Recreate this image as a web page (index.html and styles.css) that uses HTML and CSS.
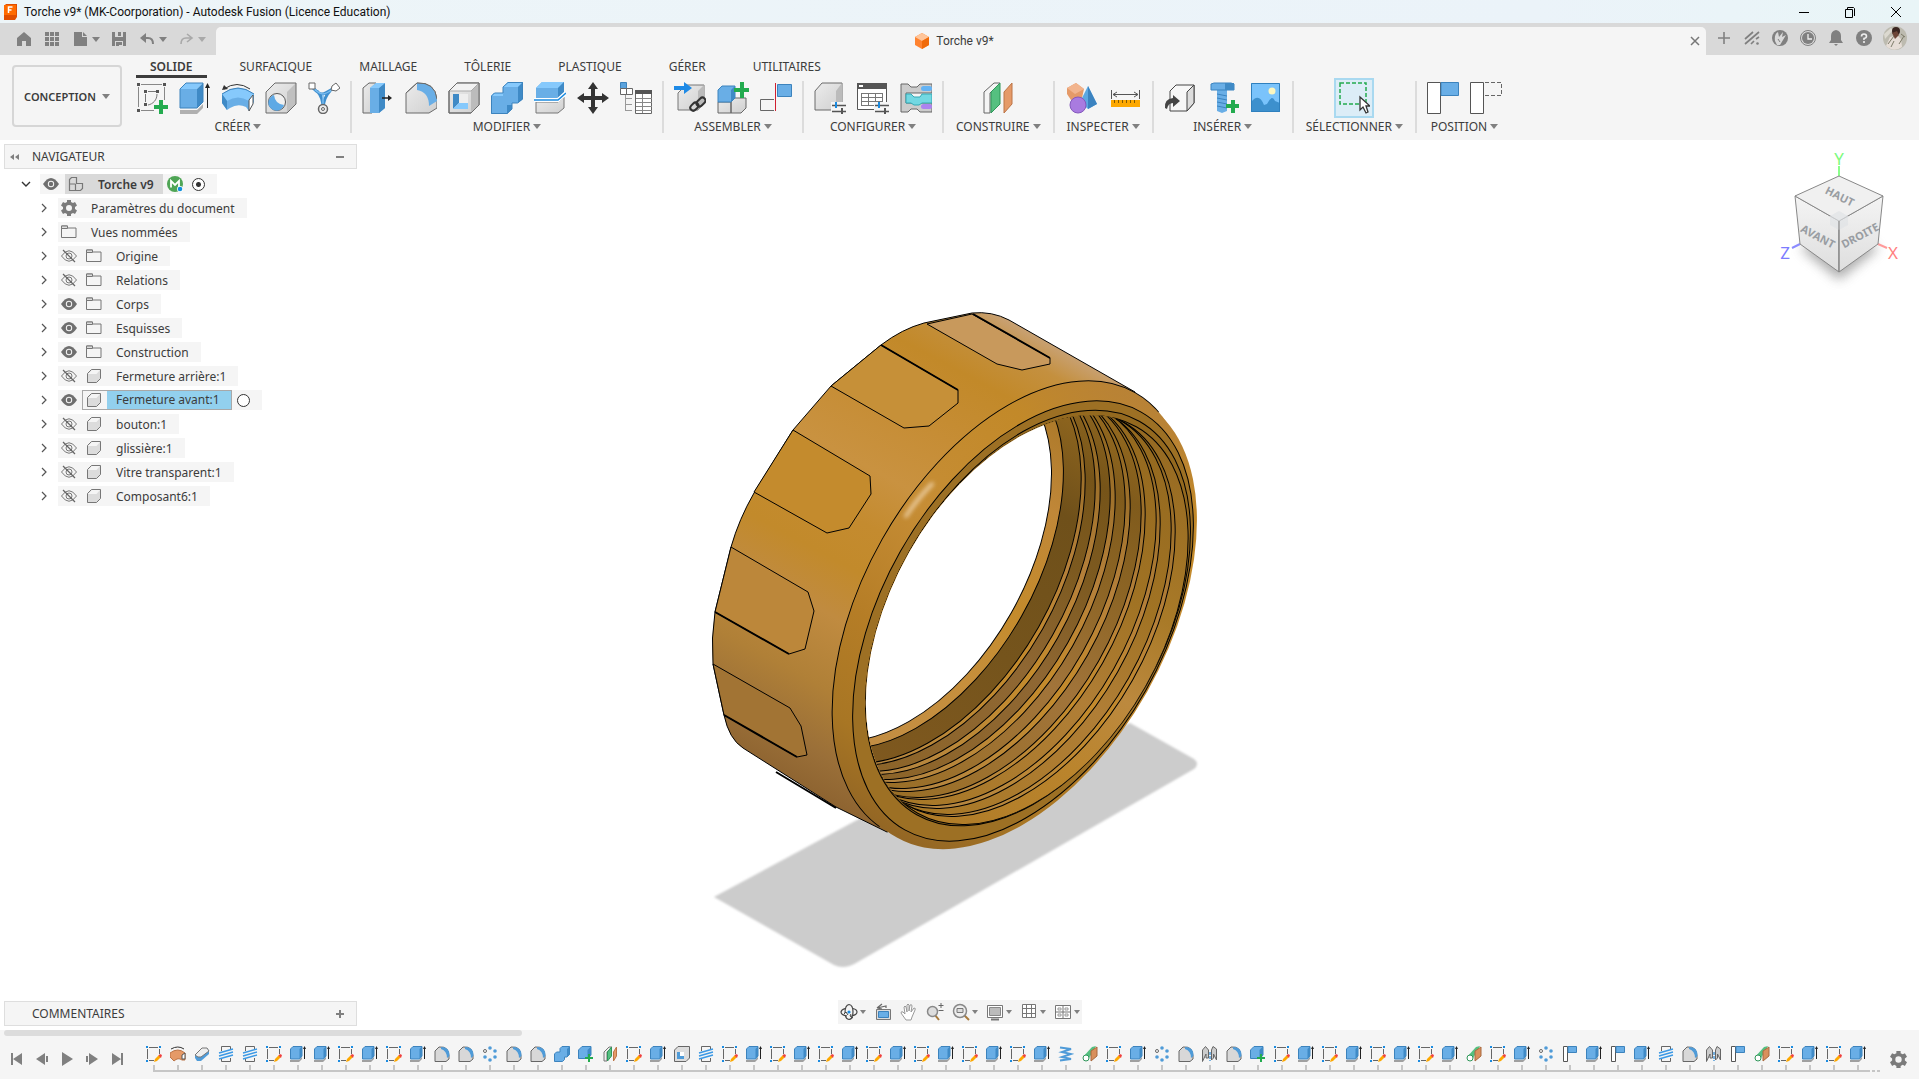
FILE: index.html
```html
<!DOCTYPE html>
<html lang="fr">
<head>
  <meta charset="UTF-8">
  <title>Torche v9* (MK-Coorporation) - Autodesk Fusion (Licence Education)</title>
  <link rel="stylesheet" href="styles.css">
</head>
<body>

  <!-- Icon sprite -->
  <svg class="sprite" aria-hidden="true">
    <defs>
      <linearGradient id="blue" x1="0" y1="0" x2="0" y2="1"><stop offset="0" stop-color="#7cc3fa"/><stop offset="1" stop-color="#5aa2dc"/></linearGradient>
      <linearGradient id="grey" x1="0" y1="0" x2="1" y2="1"><stop offset="0" stop-color="#ececec"/><stop offset="1" stop-color="#cfcfcf"/></linearGradient>
    </defs>

    <!-- ribbon, 32x32 -->
    <symbol id="i-sketch" viewBox="0 0 32 32">
      <path d="M2.500 5v20M5 2.500h21M28.500 5v13M5 28.500h13" fill="none" stroke="#888"/>
      <path d="M1 1h3v3H1zM27 1h3v3h-3zM1 27h3v3H1z" fill="#555"/>
      <path d="M9.500 12v8M12 9.500h8M21 12c0 6-4 10-9 11" fill="none" stroke="#777"/>
      <path d="M8 8h3v3H8zM20 8h3v3h-3zM8 21h3v3H8z" fill="#555"/>
      <path d="M23 18h4v5h5v4h-5v5h-4v-5h-5v-4h5z" fill="#23ab4f"/>
    </symbol>
    <symbol id="i-extrude" viewBox="0 0 32 32">
      <path d="M1 28h17l6-6v4l-6 6H1z" fill="#b0b0b0"/>
      <path d="M1 7v19h17V7z" fill="#69aee6"/><path d="M1 7l6-6h17l-6 6z" fill="#86c9fc"/><path d="M18 7l6-6v19l-6 6z" fill="#3f8ac6"/>
      <path d="M1 7l6-6h17v19l-6 6H1z" fill="none" stroke="#3c83bd"/>
      <path d="M28.500 26V3" stroke="#222"/><path d="M26 6l2.500-5L31 6z" fill="#222"/>
    </symbol>
    <symbol id="i-revolve" viewBox="0 0 32 32">
      <path d="M0 12q16-12 32 0v8l-5 9-3-4q-8-4-16 1l-3 2-5-7z" fill="#69aee6"/>
      <path d="M0 12q16-10 32 0l-5 7q-11-7-22 0z" fill="#86c9fc"/>
      <path d="M0 12l5 7v9l-5-7z" fill="#3f8ac6"/><path d="M0 12q16-12 32 0" fill="none" stroke="#3c83bd"/>
      <path d="M27 18l4-5v9l-4 7z" fill="#fff" stroke="#555"/>
      <path d="M2 7q13-9 26 0" fill="none" stroke="#333"/><path d="M0 8l2-5 4 4z" fill="#333"/>
    </symbol>
    <symbol id="i-hole" viewBox="0 0 32 32">
      <path d="M1 10l9-9h21v21l-9 9H1z" fill="url(#grey)"/><path d="M22 10l9-9v21l-9 9z" fill="#c0c0c0"/>
      <path d="M1 10l9-9h21v21l-9 9H1z" fill="none" stroke="#6b6b6b"/>
      <circle cx="12" cy="20" r="8.500" fill="#f0f0f0" stroke="#555"/><path d="M9 13a8 8 0 1 0 10 10q-9-1-10-10z" fill="#5ea9e5"/>
    </symbol>
    <symbol id="i-form" viewBox="0 0 32 32">
      <path d="M5 6q6 6 9 6t12-6M9 9q6 6 6 17M22 9q-6 6-7 17" fill="none" stroke="#3f8fce" stroke-width="3"/>
      <path d="M6 7q6 5 9 5t10-5M15 13v10" fill="none" stroke="#79bdf1" stroke-width="1.500"/>
      <path d="M1 1h6v6H1zM24 4l4-3 4 5-4 3-5-1z" fill="#fff" stroke="#666"/><circle cx="15" cy="27" r="4.500" fill="#eee" stroke="#666" stroke-width="1.500"/><circle cx="15" cy="27" r="1.500" fill="none" stroke="#666"/>
    </symbol>
    <symbol id="i-presspull" viewBox="0 0 32 32">
      <path d="M1 6l6-5h7v25l-4 5H1z" fill="url(#grey)" stroke="#666"/>
      <path d="M8 6l6-5h9v25l-6 5H8z" fill="#69aee6"/><path d="M17 6l6-5v25l-6 5z" fill="#3f8ac6"/><path d="M8 6l6-5h9l-6 5z" fill="#86c9fc"/>
      <path d="M20 16h8" stroke="#222" stroke-width="1.500"/><path d="M26 13l4 3-4 3z" fill="#222"/>
    </symbol>
    <symbol id="i-fillet" viewBox="0 0 32 32">
      <path d="M1 31V11L12 1q18-1 20 16v9l-8 5z" fill="url(#grey)" stroke="#6b6b6b"/>
      <path d="M12 1q18-1 20 18l-8 5Q24 10 12 8z" fill="#69aee6"/><path d="M12 1L1 11M12 1q18-1 20 16" fill="none" stroke="#6b6b6b"/>
    </symbol>
    <symbol id="i-shell" viewBox="0 0 32 32">
      <path d="M1 9l8-8h22v22l-8 8H1z" fill="url(#grey)" stroke="#6b6b6b"/><path d="M23 9l8-8v22l-8 8z" fill="#bcbcbc"/><path d="M1 9l8-8h22l-8 8z" fill="#f2f2f2" stroke="#aaa"/>
      <path d="M5 12h15v15H5z" fill="#eee"/><path d="M5 12h6v9l-6 6z" fill="#3f8ac6"/><path d="M5 27l6-6h9v6z" fill="#86c9fc"/><path d="M1 9l8-8h22v22l-8 8H1z" fill="none" stroke="#6b6b6b"/>
    </symbol>
    <symbol id="i-combine" viewBox="0 0 32 32">
      <path d="M0 14l3-3h9V5l5-5h15v17l-5 4h-6v6l-5 5H0z" fill="#69aee6"/>
      <path d="M12 5l5-5h15l-5 5zM0 14l3-3h9v3z" fill="#86c9fc"/><path d="M27 5l5-5v17l-5 4zM16 23h5v4l-5 5z" fill="#3f8ac6"/>
      <path d="M.500 14l3-3H12V5l5-4.500h14.500V17l-5 4H21v6l-5 4.500H.500z" fill="none" stroke="#3c83bd"/>
    </symbol>
    <symbol id="i-split" viewBox="0 0 32 32">
      <path d="M2 20h22l6-5v11l-6 5H2z" fill="url(#grey)" stroke="#777"/>
      <path d="M2 6l6-6h22v10l-6 6H2z" fill="#69aee6"/><path d="M2 6l6-6h22l-6 6z" fill="#86c9fc"/><path d="M24 6l6-6v10l-6 6z" fill="#3f8ac6"/>
      <path d="M0 18h24l8-7" fill="none" stroke="#fff" stroke-width="4"/><path d="M0 18h24l8-7" fill="none" stroke="#1b8be0" stroke-width="1.500"/>
    </symbol>
    <symbol id="i-move" viewBox="0 0 32 32">
      <path d="M16 0l5 7h-3v7h7v-3l7 5-7 5v-3h-7v7h3l-5 7-5-7h3v-7H7v3l-7-5 7-5v3h7V7h-3z" fill="#333"/>
    </symbol>
    <symbol id="i-params" viewBox="0 0 32 32">
      <path d="M.500.500h6v6h-6z" fill="#5ba3dd" stroke="#3c83bd"/><path d="M.500 6.500h6v6h-6zM6.500 6.500h6v6h-6z" fill="#fff" stroke="#666"/>
      <path d="M5.500 13v15M5 16.500h7M5 22.500h7M5 28.500h7" fill="none" stroke="#999"/>
      <path d="M15.500 8.500h16v23h-16z" fill="#fff" stroke="#666"/><path d="M15 8h17v4H15z" fill="#555"/><path d="M16 16.500h16M16 20.500h16M16 24.500h16M16 28.500h16M22.500 12v19" stroke="#888"/>
    </symbol>
    <symbol id="i-link" viewBox="0 0 32 32">
      <path d="M4 11l8-8h18v18l-6 7H4z" fill="url(#grey)" stroke="#777"/><path d="M24 9l6-6v18l-6 7z" fill="#bbb"/>
      <path d="M0 4h10V0l8 6-8 6V8H0z" fill="#1e8ae6"/>
      <rect x="16" y="22" width="9" height="6" rx="3" transform="rotate(-45 20 25)" fill="none" stroke="#333" stroke-width="2"/><rect x="22" y="17" width="10" height="6" rx="3" transform="rotate(-45 27 20)" fill="none" stroke="#333" stroke-width="2"/>
    </symbol>
    <symbol id="i-newcomp" viewBox="0 0 32 32">
      <path d="M1 20h13v11H1zM14 20l4-4h11v10l-5 5H14z" fill="url(#grey)" stroke="#666"/>
      <path d="M1 8l4-4h13v12l-4 4H1z" fill="#69aee6" stroke="#3c83bd"/><path d="M14 8l4-4v12l-4 4z" fill="#3f8ac6"/>
      <path d="M23 0h4v6h6v4h-6v6h-4v-6h-6V6h6z" fill="#23ab4f"/>
    </symbol>
    <symbol id="i-joint" viewBox="0 0 32 32">
      <path d="M14 17.500H.500v11H14" fill="none" stroke="#666"/><path d="M17.500 2.500h14v12h-14z" fill="#69aee6" stroke="#3c83bd"/><path d="M15.500 1v28" stroke="#d02030"/>
    </symbol>
    <symbol id="i-config" viewBox="0 0 32 32">
      <path d="M1 9l7-8h20v20l-6 7H1z" fill="url(#grey)" stroke="#6b6b6b"/><path d="M22 9l6-8v20l-6 7z" fill="#bbb"/>
      <path d="M17 20h16v12H17z" fill="#f5f5f5"/><path d="M18 23.500h14M18 29.500h14" stroke="#555" stroke-width="1.500"/><path d="M22 20v6" stroke="#1b8be0" stroke-width="2"/><path d="M28 26v6" stroke="#555" stroke-width="2"/>
    </symbol>
    <symbol id="i-configtable" viewBox="0 0 32 32">
      <path d="M.500 1.500h29v26h-29z" fill="#fff" stroke="#555"/><path d="M0 1h30v6H0z" fill="#555"/><path d="M2 3h4v2H2z" fill="#fff"/>
      <path d="M4 11.500h22M4 15.500h22M4 19.500h22M4 23.500h22M4.500 11v13M11.500 11v13M18.500 11v13M25.500 11v13" stroke="#777"/>
      <path d="M17 20h15v12H17z" fill="#f5f5f5"/><path d="M18 23.500h14M18 29.500h14" stroke="#555" stroke-width="1.500"/><path d="M22 20v6" stroke="#1b8be0" stroke-width="2"/><path d="M28 26v6" stroke="#555" stroke-width="2"/>
    </symbol>
    <symbol id="i-rules" viewBox="0 0 32 32">
      <path d="M1 2h7l3 3h6l3-3h12v9H6v10h26v9H20l-3-3h-6l-3 3H1z" fill="#ccc" stroke="#666"/>
      <path d="M6 12h5l3 3h6l2-3h10v9H22l-3 2h-5l-3-2H6z" fill="#73d8e2" stroke="#35a9b5"/>
      <rect x="21" y="4" width="11" height="5" rx="2.500" fill="#64b3f4"/><rect x="21" y="22" width="11" height="5" rx="2.500" fill="#ac83ef"/>
    </symbol>
    <symbol id="i-plane" viewBox="0 0 32 32">
      <path d="M2 10l10-9h6L8 11v20H2z" fill="#f4f4f4" stroke="#666"/><path d="M9 10l9-9v21l-9 9z" fill="#55c080" stroke="#2f9659"/><path d="M22 10l8-9v21l-8 9z" fill="#e59a68" stroke="#bc7446"/>
    </symbol>
    <symbol id="i-inspect" viewBox="0 0 32 32">
      <path d="M1 6l9-5 8 6-2 9-11 2-4-6z" fill="#e59a68"/><path d="M1 6l9-5 8 6-9 5z" fill="#f2b48d"/>
      <path d="M22 4l9 18-9 5-8-7z" fill="#5ba8e2"/><path d="M22 4l9 18-9 5z" fill="#3b83c0"/><circle cx="12" cy="23" r="8" fill="#a97be0" stroke="#8458bd"/>
    </symbol>
    <symbol id="i-measure" viewBox="0 0 32 32">
      <path d="M2.500 8v9M30.500 8v9M4 12.500h25M8 10l-4 2.500 4 2.500M25 10l4 2.500-4 2.500" fill="none" stroke="#555"/>
      <path d="M2 18h29v7H2z" fill="#fda800"/><path d="M5.500 18v3M9.500 18v3M13.500 18v3M17.500 18v3M21.500 18v3M25.500 18v3" stroke="#805800"/>
    </symbol>
    <symbol id="i-insert" viewBox="0 0 32 32">
      <path d="M6 9l6-6h18v18l-7 8H6z" fill="#f7f7f7" stroke="#444"/><path d="M23 10l7-7v18l-7 8z" fill="#ddd" stroke="#444"/>
      <path d="M1 26q-1-9 8-10v-3l7 6-7 6v-4q-5 0-6 6z" fill="#444"/>
    </symbol>
    <symbol id="i-bolt" viewBox="0 0 32 32">
      <path d="M10 8h10v21l-5 2-5-2z" fill="#69aee6"/><path d="M10 12l10 2M10 16l10 2M10 20l10 2M10 24l10 2" stroke="#3b83c0"/>
      <path d="M4 2l3-1h17l3 1v6H4z" fill="#69aee6" stroke="#3b83c0"/><path d="M18 1h9v7h-9z" fill="#3f8ac6"/>
      <path d="M24 18h4v4h4v4h-4v5h-4v-5h-5v-4h5z" fill="#23ab4f"/>
    </symbol>
    <symbol id="i-picture" viewBox="0 0 32 32">
      <path d="M1 1h29v29H1z" fill="#7ac3fb"/><path d="M1 20q8-10 13 3l3-1q5-10 8-3l5 2v9H1z" fill="#3d90cd"/><circle cx="22" cy="9" r="3.500" fill="#fbf6c0"/><path d="M1.500 1.500h28v28h-28z" fill="none" stroke="#2f80be"/>
    </symbol>
    <symbol id="i-select" viewBox="0 0 32 32">
      <path d="M2 1h26v21H2z" fill="none" stroke="#23ab4f" stroke-width="1.500" stroke-dasharray="4 2"/>
      <path d="M22 15v13l3-3 3 6 2-1-2-6h4z" fill="#fff" stroke="#333" stroke-width="1.300"/>
    </symbol>
    <symbol id="i-position" viewBox="0 0 32 32">
      <path d="M.500.500h13v31H.500z" fill="#fff" stroke="#555"/><path d="M14 .500h17.500v13H14z" fill="#69aee6" stroke="#3c83bd"/>
    </symbol>
    <symbol id="i-revert" viewBox="0 0 32 32">
      <path d="M.500.500h13v31H.500z" fill="#fff" stroke="#555"/><path d="M15 .500h16.500v13H15" fill="none" stroke="#666" stroke-dasharray="4 2"/>
    </symbol>

    <!-- quick access and account bar, 18x18 -->
    <symbol id="i-home" viewBox="0 0 18 18"><path d="M9 2l7 6v8h-5v-5H7v5H2V8z" fill="#808080"/></symbol>
    <symbol id="i-apps" viewBox="0 0 18 18"><path d="M2 2h4v4H2zM7 2h4v4H7zM12 2h4v4h-4zM2 7h4v4H2zM7 7h4v4H7zM12 7h4v4h-4zM2 12h4v4H2zM7 12h4v4H7zM12 12h4v4h-4z" fill="#808080"/></symbol>
    <symbol id="i-file" viewBox="0 0 18 18"><path d="M3 2h8v5h5v9H3zM12 2l4 4h-4z" fill="#808080"/></symbol>
    <symbol id="i-save" viewBox="0 0 18 18"><path d="M2 2h14v14H2z" fill="#808080"/><path d="M5 2h8v5H5zM5 11h8v5H5z" fill="#d9d9d9"/><path d="M8 2h3v4H8zM6 12h6v3H9v1H6z" fill="#808080"/></symbol>
    <symbol id="i-undo" viewBox="0 0 18 18"><path d="M4 8h6q5 0 5 6" fill="none" stroke="#808080" stroke-width="2"/><path d="M8 3v10L2 8z" fill="#808080"/></symbol>
    <symbol id="i-redo" viewBox="0 0 18 18"><path d="M10 4l5 4-5 4M15 8H9q-5 0-5 6" fill="none" stroke="#a9a9a9" stroke-width="1.600"/></symbol>
    <symbol id="i-plus" viewBox="0 0 18 18"><path d="M9 3v12M3 9h12" stroke="#808080" stroke-width="1.600"/></symbol>
    <symbol id="i-ext" viewBox="0 0 18 18"><path d="M2 10l8-7M2 15L16 3M8 15l3-3M13 10l3-2" fill="none" stroke="#808080" stroke-width="1.700"/><circle cx="14.500" cy="14.500" r="1.300" fill="#808080"/></symbol>
    <symbol id="i-learn" viewBox="0 0 18 18"><circle cx="9" cy="9" r="8" fill="#808080"/><path d="M4 12q-1-7 3-9l1 5 4-5-1 5 4-2-3 5-3 5h-3z" fill="#d9d9d9"/><path d="M7 10l2 3" stroke="#808080"/></symbol>
    <symbol id="i-clock" viewBox="0 0 18 18"><circle cx="9" cy="9" r="7.500" fill="none" stroke="#808080"/><circle cx="9" cy="9" r="6" fill="#808080"/><path d="M9 5v5h4" fill="none" stroke="#eee" stroke-width="1.300"/></symbol>
    <symbol id="i-bell" viewBox="0 0 18 18"><path d="M9 1q5 1 5 6v4l2 3H2l2-3V7q0-5 5-6zM7 15h4l-2 2z" fill="#808080"/></symbol>
    <symbol id="i-help" viewBox="0 0 18 18"><circle cx="9" cy="9" r="8" fill="#808080"/><path d="M6.500 7.500Q6.500 5 9 5t2.500 2.300Q11.500 9 9 9.500V11" fill="none" stroke="#eee" stroke-width="1.600"/><circle cx="9" cy="13" r="1.100" fill="#eee"/></symbol>

    <!-- browser tree, 16x16 -->
    <symbol id="i-right" viewBox="0 0 16 16"><path d="M6 4l4 4-4 4" fill="none" stroke="#555" stroke-width="1.200"/></symbol>
    <symbol id="i-down" viewBox="0 0 16 16"><path d="M4 6l4 4 4-4" fill="none" stroke="#333" stroke-width="1.400"/></symbol>
    <symbol id="i-eye" viewBox="0 0 16 16"><path d="M0 8q8-12 16 0-8 12-16 0z" fill="#6e6e6e"/><circle cx="8" cy="8" r="3.200" fill="#f5f5f5"/><circle cx="8" cy="8" r="2.200" fill="#6e6e6e"/></symbol>
    <symbol id="i-eyeoff" viewBox="0 0 16 16"><path d="M.500 8q7.500-10.500 15 0-7.500 10.500-15 0z" fill="none" stroke="#777"/><circle cx="8" cy="8" r="3" fill="none" stroke="#777"/><path d="M2 2l12 12" stroke="#666" stroke-width="1.200"/></symbol>
    <symbol id="i-gear" viewBox="0 0 16 16"><path fill-rule="evenodd" d="M6 0h4v2l2 1 2-1 2 3.500L14 7v2l2 1.500L14 14l-2-1-2 1v2H6v-2l-2-1-2 1-2-3.500L2 9V7L0 5.500 2 2l2 1 2-1zM8 5a3 3 0 1 0 0 6 3 3 0 0 0 0-6z" fill="#7b7b7b"/></symbol>
    <symbol id="i-folder" viewBox="0 0 16 16"><path d="M.500 2h6v2h8.500v9.500H.500z" fill="#f5f5f5" stroke="#777"/><path d="M.500 4.500h6V2h-6z" fill="#ddd" stroke="#777"/></symbol>
    <symbol id="i-body" viewBox="0 0 16 16"><path d="M1.500 5.500l4-4h9v9l-4 4h-9z" fill="#dcdcdc" stroke="#777"/><path d="M2 6l4-4h8l-3.500 4z" fill="#f5f5f5"/></symbol>
    <symbol id="i-assembly" viewBox="0 0 16 16"><path d="M1.500 3.500l2-2h5v6h6v5l-2 2h-11zM1.500 8h6M7.500 8v6" fill="none" stroke="#777" stroke-width="1.200"/></symbol>

    <!-- timeline, 16x16 -->
    <symbol id="t-sketch" viewBox="0 0 16 16"><path d="M1.500 3v10M3 1.500h9M13.500 3v5M3 14.500h5" fill="none" stroke="#666"/><path d="M0 0h2v2H0zM13 0h2v2h-2zM0 14h2v2H0z" fill="#1b8be0"/><path d="M8 16l1-3 4-4 2 2-4 4z" fill="#fda800"/><path d="M12.500 9.500L14 8l2 1-1 3z" fill="#f04040"/></symbol>
    <symbol id="t-extrude" viewBox="0 0 16 16"><path d="M0 14h9l3-3v2l-3 3H0z" fill="#a0a0a0"/><path d="M.500 3L3 .500h9V10l-2.500 3h-9z" fill="#69aee6" stroke="#3c83bd"/><path d="M9.500 3L12 .500V10l-2.500 3z" fill="#3f8ac6"/><path d="M14.500 2v11" stroke="#222"/><path d="M13 3l1.500-3L16 3z" fill="#222"/></symbol>
    <symbol id="t-revolve" viewBox="0 0 16 16"><path d="M0 7q8-6 15 0v7h-3q-4-3-8 1l-4-4z" fill="#e59a68" stroke="#bc7446"/><path d="M1 3q7-4 13 0" fill="none" stroke="#333"/><path d="M12 9l3-2v6h-3z" fill="#fff" stroke="#555"/></symbol>
    <symbol id="t-chamfer" viewBox="0 0 16 16"><path d="M1 9l7-7h5l2 3v3l-8 7H3l-2-3z" fill="#4f9bd8"/><path d="M1 9l7-7h5l2 3-8 6H4z" fill="#eee" stroke="#777"/></symbol>
    <symbol id="t-thread" viewBox="0 0 16 16"><path d="M3.500 5V.500h9V4M3.500 12v3.500h9V12" fill="none" stroke="#666"/><path d="M1 7l14-4M1 10l14-4M1 13l14-4" stroke="#3c99e5" stroke-width="1.400"/></symbol>
    <symbol id="t-fillet" viewBox="0 0 16 16"><path d="M1 15.500V5l4-4q10-1 10 9v3l-3 2.500z" fill="#d8d8d8" stroke="#666"/><path d="M7 1q9 0 8.500 9l-2.500 2q0-7-6-9z" fill="#4f9bd8"/></symbol>
    <symbol id="t-pattern" viewBox="0 0 16 16"><g fill="#4f9bd8"><circle cx="8" cy="2" r="1.800"/><circle cx="13" cy="5" r="1.800"/><circle cx="13" cy="11" r="1.800"/><circle cx="8" cy="14" r="1.800"/><circle cx="3" cy="11" r="1.800"/></g><circle cx="3" cy="5" r="1.500" fill="#fff" stroke="#666"/></symbol>
    <symbol id="t-combine" viewBox="0 0 16 16"><path d="M.500 8l2-2H6V2.500l2-2h7.500v8L13 11h-2.500v2.500l-2 2h-8z" fill="#69aee6" stroke="#3c83bd"/><path d="M13 3l2.500-2.500v8L13 11z" fill="#3f8ac6"/></symbol>
    <symbol id="t-newcomp" viewBox="0 0 16 16"><path d="M.500 4L4 .500h9V9l-3 3.500H.500z" fill="#69aee6" stroke="#3c83bd"/><path d="M9.500 4L13 .500V9l-3.500 3.500z" fill="#3f8ac6"/><path d="M10 8h2v3h3v2h-3v3h-2v-3H7v-2h3z" fill="#23ab4f"/></symbol>
    <symbol id="t-plane" viewBox="0 0 16 16"><path d="M2 6l5-5h3L5 6v9H2z" fill="#eee" stroke="#777"/><path d="M5.500 6l4-5v9l-4 5z" fill="#55c080" stroke="#2f9659"/><path d="M11.500 6l3-5v9l-3 5z" fill="#e59a68" stroke="#bc7446"/></symbol>
    <symbol id="t-shell" viewBox="0 0 16 16"><path d="M.500 4L4 .500h11.500V12L12 15.500H.500z" fill="#ddd" stroke="#666"/><path d="M3 6h7v7H3z" fill="#fff"/><path d="M3 6h3v4h4v3H3z" fill="#4f9bd8"/></symbol>
    <symbol id="t-coil" viewBox="0 0 16 16"><path d="M2 1.500l11 1.500-9 3 9 2-9 3 9 2-11 1.500" fill="none" stroke="#4f9bd8" stroke-width="2"/></symbol>
    <symbol id="t-tangent" viewBox="0 0 16 16"><path d="M1 11L10 1l4-1-8 14q-4 2-5-3z" fill="#55c080"/><circle cx="4" cy="12" r="3" fill="#fff" stroke="#2f9659"/><path d="M9 5l6-4v9l-6 5z" fill="#d9905c" stroke="#a8693e"/></symbol>
    <symbol id="t-mirror" viewBox="0 0 16 16"><path d="M.500 15.500V4l3-3.500L6.500 4v8H4V8zM14.500 14V3L11 .500 9.500 4v10l2-2V8z" fill="#ccc" stroke="#666"/><path d="M8 6v9" stroke="#4f9bd8" stroke-width="1.500" stroke-dasharray="3 1"/></symbol>
    <symbol id="t-position" viewBox="0 0 16 16"><path d="M1.500.500h4v15h-4z" fill="#fff" stroke="#555"/><path d="M6 .500h8.500v6H6z" fill="#69aee6" stroke="#3c83bd"/></symbol>

    <!-- playback and view navigation, 18x18 -->
    <symbol id="p-start" viewBox="0 0 18 18"><path d="M3 3h2v12H3zM14 3v12L5 9z" fill="#808080"/></symbol>
    <symbol id="p-prev" viewBox="0 0 18 18"><path d="M12 3v12L3 9zM13 6h2v6h-2z" fill="#808080"/></symbol>
    <symbol id="p-play" viewBox="0 0 18 18"><path d="M4 2l11 7-11 7z" fill="#808080"/></symbol>
    <symbol id="p-next" viewBox="0 0 18 18"><path d="M6 3v12l9-6zM3 6h2v6H3z" fill="#808080"/></symbol>
    <symbol id="p-end" viewBox="0 0 18 18"><path d="M13 3h2v12h-2zM4 3v12l9-6z" fill="#808080"/></symbol>
    <symbol id="n-orbit" viewBox="0 0 18 18"><path d="M5 10Q5 2 9 1.500 13 2 13 9t-4 7.500Q6 16 5.500 13M13 5.500q4 1 4 3.500 0 3-6 4M7 13q-6-1-6-4 0-2 4-3.500" fill="none" stroke="#444" stroke-width="1.200"/><path d="M4 11l2-2 2 3M11 11l-1 2 3 2" fill="none" stroke="#444"/><circle cx="9" cy="9" r="1.600" fill="#1b8be0"/></symbol>
    <symbol id="n-look" viewBox="0 0 18 18"><path d="M2.500 6.500h14v10h-14z" fill="#ddd" stroke="#777"/><path d="M4.500 8.500h10v6h-10z" fill="#69aee6" stroke="#3c83bd"/><path d="M3 5l9-2v2M3 5l5-4M3 5l5 1" fill="none" stroke="#666" stroke-width="1.200"/></symbol>
    <symbol id="n-pan" viewBox="0 0 18 18"><path d="M6 17L1 10q0-2 2-1l2 2-1-7q1-2 2 0l1 5V2q1-2 2 0v6l1-6q2-1 2 1l-1 6 3-4q2 0 1 2l-3 7-1 3z" fill="#fff" stroke="#999"/></symbol>
    <symbol id="n-zoom" viewBox="0 0 18 18"><path d="M9 12l4 5" stroke="#a87a3c" stroke-width="2"/><circle cx="6.500" cy="8.500" r="5" fill="#ddd" stroke="#888" stroke-width="1.500"/><path d="M15 0v5M12.500 2.500h5M12.500 7.500h5" stroke="#666"/></symbol>
    <symbol id="n-fit" viewBox="0 0 18 18"><path d="M12 12l5 5" stroke="#a87a3c" stroke-width="2"/><circle cx="8" cy="8" r="6.500" fill="#eee" stroke="#888" stroke-width="1.500"/><path d="M5 5.500h6v4H5z" fill="#ddd" stroke="#777"/></symbol>
    <symbol id="n-display" viewBox="0 0 18 18"><path d="M1.500 2.500h15v12h-15z" fill="#fff" stroke="#777"/><path d="M3.500 4.500h11v8h-11z" fill="#bbb" stroke="#888"/><path d="M5 16.500h8" stroke="#777" stroke-width="2"/></symbol>
    <symbol id="n-grid" viewBox="0 0 18 18"><path d="M2.500 1.500h13v13h-13zM6.500 1.500v13M11.500 1.500v13M2.500 5.500h13M2.500 10.500h13" fill="#fff" stroke="#777"/></symbol>
    <symbol id="n-views" viewBox="0 0 18 18"><path d="M1.500 2.500h15v13h-15zM9 2.500v13M1.500 9h15" fill="#fff" stroke="#777"/><path d="M4 5h3v2H4zM11 5h3v2h-3zM4 11h3v2H4zM11 11h3v2h-3z" fill="none" stroke="#999"/></symbol>
  </svg>

  <header class="titlebar">
    <svg class="app-logo" viewBox="0 0 14 16"><path d="M1 2l2-2h11v13l-2 3H1z" fill="#e04e00"/><path d="M1 1h12v10H1z" fill="#ff6b00"/><path d="M5.500 9V3h4M5.500 6h3" fill="none" stroke="#fff" stroke-width="1.500"/></svg>
    <span class="app-title">Torche v9* (MK-Coorporation) - Autodesk Fusion (Licence Education)</span>
    <button class="window-button" aria-label="Réduire"><svg viewBox="0 0 12 12"><path d="M1 6.500h10" stroke="#000"/></svg></button>
    <button class="window-button" aria-label="Restaurer"><svg viewBox="0 0 12 12"><path d="M1.500 3.500h7v8h-7zM3.500 3V1.500h6l1 1V10" fill="none" stroke="#000"/></svg></button>
    <button class="window-button" aria-label="Fermer"><svg viewBox="0 0 12 12"><path d="M1 1l10 10M11 1L1 11" stroke="#000"/></svg></button>
  </header>

  <div class="docbar">
    <div class="quick-access">
      <button aria-label="Accueil"><svg><use href="#i-home"/></svg></button>
      <button aria-label="Données"><svg><use href="#i-apps"/></svg></button>
      <button aria-label="Fichier"><svg><use href="#i-file"/></svg><i class="caret"></i></button>
      <button aria-label="Enregistrer"><svg><use href="#i-save"/></svg></button>
      <button aria-label="Annuler"><svg><use href="#i-undo"/></svg><i class="caret"></i></button>
      <button aria-label="Rétablir"><svg><use href="#i-redo"/></svg><i class="caret light"></i></button>
    </div>
    <div class="doc-tab">
      <div class="doc-name">
        <svg viewBox="0 0 16 16"><path d="M8 0l7 4v8l-7 4-7-4V4z" fill="#ff8330"/><path d="M8 0l7 4-7 4-7-4z" fill="#ffc59a"/><path d="M15 4v8l-7 4V8z" fill="#f06a0a"/></svg>
        <span>Torche v9*</span>
      </div>
      <button class="doc-close" aria-label="Fermer le document"><svg viewBox="0 0 12 12"><path d="M2 2l8 8M10 2l-8 8" stroke="#777" stroke-width="1.500"/></svg></button>
    </div>
    <div class="account-bar">
      <button aria-label="Nouvelle conception"><svg><use href="#i-plus"/></svg></button>
      <button aria-label="Extensions"><svg><use href="#i-ext"/></svg></button>
      <button aria-label="Apprentissage"><svg><use href="#i-learn"/></svg></button>
      <button aria-label="Etat des tâches"><svg><use href="#i-clock"/></svg></button>
      <button aria-label="Notifications"><svg><use href="#i-bell"/></svg></button>
      <button aria-label="Aide"><svg><use href="#i-help"/></svg></button>
      <button class="avatar" aria-label="Profil">
        <svg viewBox="0 0 24 24"><circle cx="12" cy="12" r="12" fill="#bdbbb0"/><path d="M3 20l4-9 7-2 4 4 1 8q-8 6-16-1z" fill="#e6ddd6"/><path d="M1 8l7-6 2 2-8 9z" fill="#dcd9d0"/><circle cx="13" cy="5" r="4" fill="#3a2520"/><path d="M9 7l3 6 4-4-2-4z" fill="#6d4537"/><path d="M5 18l6-8M16 18l5-8M8 21l3-6M18 8l4 3" stroke="#7d7b68"/></svg>
      </button>
    </div>
  </div>

  <div class="ribbon">
    <button class="workspace">CONCEPTION <i class="caret"></i></button>
    <div class="ribbon-main">
      <nav class="ribbon-tabs">
        <button class="active">SOLIDE</button>
        <button>SURFACIQUE</button>
        <button>MAILLAGE</button>
        <button>TÔLERIE</button>
        <button>PLASTIQUE</button>
        <button>GÉRER</button>
        <button>UTILITAIRES</button>
      </nav>
      <div class="ribbon-groups">
        <div class="group">
          <div class="tools">
            <button aria-label="Esquisse"><svg><use href="#i-sketch"/></svg></button>
            <button aria-label="Extrusion"><svg><use href="#i-extrude"/></svg></button>
            <button aria-label="Révolution"><svg><use href="#i-revolve"/></svg></button>
            <button aria-label="Perçage"><svg><use href="#i-hole"/></svg></button>
            <button aria-label="Forme"><svg><use href="#i-form"/></svg></button>
          </div>
          <button class="group-menu">CRÉER<i class="caret"></i></button>
        </div>
        <div class="group">
          <div class="tools">
            <button aria-label="Appuyer/Tirer"><svg><use href="#i-presspull"/></svg></button>
            <button aria-label="Congé"><svg><use href="#i-fillet"/></svg></button>
            <button aria-label="Coque"><svg><use href="#i-shell"/></svg></button>
            <button aria-label="Combiner"><svg><use href="#i-combine"/></svg></button>
            <button aria-label="Scinder"><svg><use href="#i-split"/></svg></button>
            <button aria-label="Déplacer"><svg><use href="#i-move"/></svg></button>
            <button aria-label="Paramètres"><svg><use href="#i-params"/></svg></button>
          </div>
          <button class="group-menu">MODIFIER<i class="caret"></i></button>
        </div>
        <div class="group">
          <div class="tools">
            <button aria-label="Insérer un composant"><svg><use href="#i-link"/></svg></button>
            <button aria-label="Nouveau composant"><svg><use href="#i-newcomp"/></svg></button>
            <button aria-label="Liaison"><svg><use href="#i-joint"/></svg></button>
          </div>
          <button class="group-menu">ASSEMBLER<i class="caret"></i></button>
        </div>
        <div class="group">
          <div class="tools">
            <button aria-label="Configurer"><svg><use href="#i-config"/></svg></button>
            <button aria-label="Table de configuration"><svg><use href="#i-configtable"/></svg></button>
            <button aria-label="Règles"><svg><use href="#i-rules"/></svg></button>
          </div>
          <button class="group-menu">CONFIGURER<i class="caret"></i></button>
        </div>
        <div class="group">
          <div class="tools">
            <button aria-label="Plan décalé"><svg><use href="#i-plane"/></svg></button>
          </div>
          <button class="group-menu">CONSTRUIRE<i class="caret"></i></button>
        </div>
        <div class="group">
          <div class="tools">
            <button aria-label="Propriétés"><svg><use href="#i-inspect"/></svg></button>
            <button aria-label="Mesurer"><svg><use href="#i-measure"/></svg></button>
          </div>
          <button class="group-menu">INSPECTER<i class="caret"></i></button>
        </div>
        <div class="group">
          <div class="tools">
            <button aria-label="Insérer un dérivé"><svg><use href="#i-insert"/></svg></button>
            <button aria-label="Insérer une fixation"><svg><use href="#i-bolt"/></svg></button>
            <button aria-label="Insérer une image"><svg><use href="#i-picture"/></svg></button>
          </div>
          <button class="group-menu">INSÉRER<i class="caret"></i></button>
        </div>
        <div class="group">
          <div class="tools">
            <button class="pressed" aria-label="Sélectionner"><svg><use href="#i-select"/></svg></button>
          </div>
          <button class="group-menu">SÉLECTIONNER<i class="caret"></i></button>
        </div>
        <div class="group">
          <div class="tools">
            <button aria-label="Capturer la position"><svg><use href="#i-position"/></svg></button>
            <button aria-label="Rétablir la position"><svg><use href="#i-revert"/></svg></button>
          </div>
          <button class="group-menu">POSITION<i class="caret"></i></button>
        </div>
      </div>
    </div>
  </div>

  <main class="viewport">
    <aside class="side">
      <div class="panel-header">
        <button aria-label="Replier"><svg viewBox="0 0 16 16"><path d="M7 5v6L3 8zM12 5v6L8 8z" fill="#808080"/></svg></button>
        <h2>NAVIGATEUR</h2>
        <button aria-label="Réduire"><svg viewBox="0 0 16 16"><path d="M4 7h8v2H4z" fill="#808080"/></svg></button>
      </div>
      <ul class="tree">
        <li class="root">
          <button class="toggle" aria-label="Replier"><svg><use href="#i-down"/></svg></button>
          <div class="node"><svg><use href="#i-eye"/></svg><span class="root-name"><svg><use href="#i-assembly"/></svg>Torche v9</span>
            <svg class="badge" viewBox="0 0 16 16"><circle cx="8" cy="8" r="8" fill="#4fa555"/><path d="M4 11.500V5l4 4 4-4v6.500" fill="none" stroke="#fff" stroke-width="1.800"/><circle cx="13" cy="13" r="3" fill="#fff"/><circle cx="13" cy="13" r="2.300" fill="#1090dc"/></svg>
            <input type="radio" name="active" aria-label="Activer Torche v9" checked>
          </div>
        </li>
        <li><button class="toggle" aria-label="Déplier"><svg><use href="#i-right"/></svg></button><div class="node"><svg><use href="#i-gear"/></svg><span>Paramètres du document</span></div></li>
        <li><button class="toggle" aria-label="Déplier"><svg><use href="#i-right"/></svg></button><div class="node"><svg><use href="#i-folder"/></svg><span>Vues nommées</span></div></li>
        <li><button class="toggle" aria-label="Déplier"><svg><use href="#i-right"/></svg></button><div class="node"><svg><use href="#i-eyeoff"/></svg><svg><use href="#i-folder"/></svg><span>Origine</span></div></li>
        <li><button class="toggle" aria-label="Déplier"><svg><use href="#i-right"/></svg></button><div class="node"><svg><use href="#i-eyeoff"/></svg><svg><use href="#i-folder"/></svg><span>Relations</span></div></li>
        <li><button class="toggle" aria-label="Déplier"><svg><use href="#i-right"/></svg></button><div class="node"><svg><use href="#i-eye"/></svg><svg><use href="#i-folder"/></svg><span>Corps</span></div></li>
        <li><button class="toggle" aria-label="Déplier"><svg><use href="#i-right"/></svg></button><div class="node"><svg><use href="#i-eye"/></svg><svg><use href="#i-folder"/></svg><span>Esquisses</span></div></li>
        <li><button class="toggle" aria-label="Déplier"><svg><use href="#i-right"/></svg></button><div class="node"><svg><use href="#i-eye"/></svg><svg><use href="#i-folder"/></svg><span>Construction</span></div></li>
        <li><button class="toggle" aria-label="Déplier"><svg><use href="#i-right"/></svg></button><div class="node"><svg><use href="#i-eyeoff"/></svg><svg><use href="#i-body"/></svg><span>Fermeture arrière:1</span></div></li>
        <li><button class="toggle" aria-label="Déplier"><svg><use href="#i-right"/></svg></button><div class="node"><svg><use href="#i-eye"/></svg><span class="selected"><svg><use href="#i-body"/></svg><span>Fermeture avant:1</span></span><input type="radio" name="active" aria-label="Activer Fermeture avant:1"></div></li>
        <li><button class="toggle" aria-label="Déplier"><svg><use href="#i-right"/></svg></button><div class="node"><svg><use href="#i-eyeoff"/></svg><svg><use href="#i-body"/></svg><span>bouton:1</span></div></li>
        <li><button class="toggle" aria-label="Déplier"><svg><use href="#i-right"/></svg></button><div class="node"><svg><use href="#i-eyeoff"/></svg><svg><use href="#i-body"/></svg><span>glissière:1</span></div></li>
        <li><button class="toggle" aria-label="Déplier"><svg><use href="#i-right"/></svg></button><div class="node"><svg><use href="#i-eyeoff"/></svg><svg><use href="#i-body"/></svg><span>Vitre transparent:1</span></div></li>
        <li><button class="toggle" aria-label="Déplier"><svg><use href="#i-right"/></svg></button><div class="node"><svg><use href="#i-eyeoff"/></svg><svg><use href="#i-body"/></svg><span>Composant6:1</span></div></li>
      </ul>
      <div class="panel-header comments">
        <h2>COMMENTAIRES</h2>
        <button aria-label="Ajouter un commentaire"><svg viewBox="0 0 16 16"><path d="M7 4h2v3h3v2H9v3H7V9H4V7h3z" fill="#808080"/></svg></button>
      </div>
    </aside>

    <div class="scene">
      <svg class="model" viewBox="5 0 530 690" role="img" aria-label="Fermeture avant">
        <defs>
          <linearGradient id="bodyFill" gradientUnits="userSpaceOnUse" x1="184" y1="540" x2="426" y2="90">
            <stop offset="0" stop-color="#8d6330"/><stop offset=".08" stop-color="#9a6f38"/><stop offset=".2" stop-color="#b08037"/><stop offset=".33" stop-color="#c08b40"/><stop offset=".43" stop-color="#c28a2b"/><stop offset=".52" stop-color="#c48b2f"/><stop offset=".62" stop-color="#c99240"/><stop offset=".74" stop-color="#c68d35"/><stop offset=".87" stop-color="#c28929"/><stop offset=".95" stop-color="#c4903f"/><stop offset="1" stop-color="#c8a070"/>
          </linearGradient>
          <!-- ellipse fills run along the long axis, bottom left to top right -->
          <linearGradient id="rimFill">
            <stop offset="0" stop-color="#936624"/><stop offset=".15" stop-color="#a87624"/><stop offset=".35" stop-color="#b57d26"/><stop offset=".6" stop-color="#c68d35"/><stop offset=".85" stop-color="#c28929"/><stop offset="1" stop-color="#b88236"/>
          </linearGradient>
          <linearGradient id="landFill">
            <stop offset="0" stop-color="#b07c28"/><stop offset=".25" stop-color="#ba842c"/><stop offset=".45" stop-color="#bc893e"/><stop offset=".65" stop-color="#a97a28"/><stop offset="1" stop-color="#966a22"/>
          </linearGradient>
          <linearGradient id="crestFill">
            <stop offset="0" stop-color="#b28442"/><stop offset=".4" stop-color="#c48b2c"/><stop offset=".65" stop-color="#b5803a"/><stop offset="1" stop-color="#8d651f"/>
          </linearGradient>
          <linearGradient id="grooveFront">
            <stop offset="0" stop-color="#a87827"/><stop offset=".4" stop-color="#b07e36"/><stop offset=".65" stop-color="#a17324"/><stop offset="1" stop-color="#94691f"/>
          </linearGradient>
          <linearGradient id="grooveMid">
            <stop offset="0" stop-color="#9a6f27"/><stop offset=".4" stop-color="#a1743a"/><stop offset=".65" stop-color="#8d6525"/><stop offset=".85" stop-color="#805b1c"/><stop offset="1" stop-color="#94691f"/>
          </linearGradient>
          <linearGradient id="grooveBack">
            <stop offset="0" stop-color="#8c6428"/><stop offset=".4" stop-color="#8f6733"/><stop offset=".65" stop-color="#7d5a20"/><stop offset=".85" stop-color="#765419"/><stop offset="1" stop-color="#8d651f"/>
          </linearGradient>
          <linearGradient id="recessFill">
            <stop offset="0" stop-color="#80591f"/><stop offset=".4" stop-color="#75541c"/><stop offset=".75" stop-color="#6f501a"/><stop offset="1" stop-color="#94691f"/>
          </linearGradient>
          <linearGradient id="lipFill">
            <stop offset="0" stop-color="#c28d45"/><stop offset=".3" stop-color="#c68f3c"/><stop offset=".5" stop-color="#c48b2c"/><stop offset=".75" stop-color="#c08738"/><stop offset="1" stop-color="#a87626"/>
          </linearGradient>
          <filter id="soft"><feGaussianBlur stdDeviation="1"/></filter>
          <filter id="glow" x="-50%" y="-50%" width="200%" height="200%"><feGaussianBlur stdDeviation="2"/></filter>
          <ellipse id="thread" rx="220" ry="134" transform="rotate(-60.500)"/>
          <ellipse id="mouth" rx="226" ry="136" transform="translate(338 328) rotate(-60.500)"/>
          <clipPath id="mouthClip"><use href="#mouth"/></clipPath>
          <clipPath id="boreClip"><ellipse rx="222" ry="136" transform="translate(337 330) rotate(-60.500)"/></clipPath>
          <clipPath id="edgeClip"><path d="M0 0h426L472 117 184 545 0 600z"/></clipPath>
        </defs>

        <path d="M24 607l156-84 260-90 64 36q6 5 0 10L166 673q-12 7-22 2z" fill="#ccc" filter="url(#soft)"/>

        <!-- knurled outer body -->
        <path d="M282 23q20-2 37 7l126 72L300 500 197 542l-51-25-93-59q-14-9-19-33L23 374q-2-26 2-52l16-65q8-28 23-54l39-63 38-44 50-41q21-16 43-22z" fill="url(#bodyFill)" stroke="#000"/>
        <g stroke="#000" stroke-linejoin="round">
          <path d="M237 34l45-10 78 44v6l-28 6-25-6z" fill="#c8995c"/>
          <path d="M141 96l50-41 77 45v13l-29 23-25 2z" fill="#c69038"/>
          <path d="M64 202l39-62 77 46 1 18-22 34-22 5z" fill="#c48b2d"/>
          <path d="M25 322l16-65 77 45 6 19-9 38-16 5z" fill="#bc873a"/>
          <path d="M23 374l77 44 11 18 6 29-10 2-73-42z" fill="#a27434"/>
        </g>
        <path d="M283 24l77 44M191 55l77 45M25 322l74 42M34 425l73 42M86 482l60 36" fill="none" stroke="#000" stroke-width="2"/>

        <!-- rim -->
        <ellipse rx="252" ry="148" transform="translate(321 322) rotate(-60.500)" fill="url(#rimFill)"/>
        <ellipse rx="250" ry="146" transform="translate(330 330) rotate(-60.500)" fill="url(#rimFill)"/>
        <g clip-path="url(#edgeClip)">
          <ellipse rx="252" ry="148" transform="translate(321 322) rotate(-60.500)" fill="none" stroke="#000"/>
        </g>
        <path d="M216 226q12-18 26-32" fill="none" stroke="#f3d9b4" stroke-width="4" stroke-linecap="round" opacity=".8" filter="url(#glow)"/>
        <ellipse rx="240" ry="141" transform="translate(333 331) rotate(-60.500)" fill="#9d7024" stroke="#000"/>
        <use href="#mouth" fill="#94691f" stroke="#000"/>

        <!-- threaded bore, painted from the mouth to the back -->
        <g clip-path="url(#mouthClip)">
          <ellipse rx="222" ry="136" transform="translate(337 330) rotate(-60.500)" fill="url(#landFill)" stroke="#000"/>
          <g clip-path="url(#boreClip)" stroke="#000">
            <use href="#thread" transform="translate(326 324)" fill="url(#crestFill)"/>
            <use href="#thread" transform="translate(322 322)" fill="url(#grooveFront)"/>
            <use href="#thread" transform="translate(311 316)" fill="url(#crestFill)"/>
            <use href="#thread" transform="translate(307 313)" fill="url(#grooveFront)"/>
            <use href="#thread" transform="translate(296 307)" fill="url(#crestFill)"/>
            <use href="#thread" transform="translate(292 305)" fill="url(#grooveMid)"/>
            <use href="#thread" transform="translate(281 299)" fill="url(#crestFill)"/>
            <use href="#thread" transform="translate(276 296)" fill="url(#grooveMid)"/>
            <use href="#thread" transform="translate(266 290)" fill="url(#crestFill)"/>
            <use href="#thread" transform="translate(261 287)" fill="url(#grooveBack)"/>
            <use href="#thread" transform="translate(251 282)" fill="url(#crestFill)"/>
            <use href="#thread" transform="translate(246 279)" fill="url(#grooveBack)"/>
            <use href="#thread" transform="translate(236 273)" fill="url(#crestFill)"/>
            <use href="#thread" transform="translate(232 271)" fill="url(#recessFill)"/>
            <ellipse rx="212" ry="126" transform="translate(222 264) rotate(-60.500)" fill="url(#lipFill)"/>
            <ellipse rx="205" ry="122" transform="translate(215 263) rotate(-60.500)" fill="#fff"/>
          </g>
        </g>
      </svg>
    </div>

    <svg class="viewcube" viewBox="0 0 179 150" role="img" aria-label="Cube de vue">
      <defs>
        <filter id="cubeShadow" x="-50%" y="-50%" width="200%" height="200%"><feGaussianBlur stdDeviation="6"/></filter>
        <linearGradient id="cubeFace" x1="0" y1="0" x2="0" y2="1"><stop offset="0" stop-color="#f4f4f4"/><stop offset="1" stop-color="#dedede"/></linearGradient>
      </defs>
      <path d="M60 108l39-16 40 16-40 32z" fill="#777" opacity=".6" filter="url(#cubeShadow)"/>
      <path d="M99 26v10" stroke="#8aff8a" stroke-width="2"/><path d="M60 104l-8 4" stroke="#8a8aff" stroke-width="2"/><path d="M138 104l9 4" stroke="#ff9a9a" stroke-width="2"/>
      <path d="M55 56l44 25v51l-39-28z" fill="url(#cubeFace)" stroke="#888"/>
      <path d="M99 81l44-25-5 48-39 28z" fill="url(#cubeFace)" stroke="#888"/>
      <path d="M99 36l44 20-44 25-44-25z" fill="#f0f0f0" stroke="#888"/>
      <path d="M99 71l9 5v9l-9 5-9-5v-9z" fill="#dfe2e6" opacity=".7"/><path d="M99 81v51" stroke="#888"/>
      <g class="cube-text" text-anchor="middle">
        <text transform="translate(98 60) rotate(27)">HAUT</text>
        <text transform="translate(76 100) rotate(28)">AVANT</text>
        <text transform="translate(122 99) rotate(-28)">DROITE</text>
      </g>
      <g class="axis-text" text-anchor="middle"><text x="99" y="25" fill="#7dfa7d">Y</text><text x="45" y="119" fill="#7c7cff">Z</text><text x="153" y="119" fill="#ff8080">X</text></g>
    </svg>

    <div class="view-nav">
      <button aria-label="Orbite"><svg><use href="#n-orbit"/></svg><i class="caret"></i></button>
      <button aria-label="Regarder"><svg><use href="#n-look"/></svg></button>
      <button aria-label="Panoramique"><svg><use href="#n-pan"/></svg></button>
      <button aria-label="Zoom"><svg><use href="#n-zoom"/></svg></button>
      <button aria-label="Ajuster"><svg><use href="#n-fit"/></svg><i class="caret"></i></button>
      <button aria-label="Affichage"><svg><use href="#n-display"/></svg><i class="caret"></i></button>
      <button aria-label="Grille"><svg><use href="#n-grid"/></svg><i class="caret"></i></button>
      <button aria-label="Fenêtres"><svg><use href="#n-views"/></svg><i class="caret"></i></button>
    </div>
  </main>

  <footer class="timeline">
    <div class="scrollbar"></div>
    <div class="timeline-row">
      <div class="playback">
        <button aria-label="Début"><svg><use href="#p-start"/></svg></button>
        <button aria-label="Précédent"><svg><use href="#p-prev"/></svg></button>
        <button aria-label="Lecture"><svg><use href="#p-play"/></svg></button>
        <button aria-label="Suivant"><svg><use href="#p-next"/></svg></button>
        <button aria-label="Fin"><svg><use href="#p-end"/></svg></button>
      </div>
      <div class="features" id="features"></div>
      <button class="settings" aria-label="Paramètres du scénario"><svg><use href="#i-gear"/></svg></button>
    </div>
  </footer>

  <script src="timeline.js"></script>
</body>
</html>
```

FILE: styles.css
```css
* {
  box-sizing: border-box;
}

body {
  margin: 0;
  min-height: 100vh;
  display: flex;
  flex-direction: column;
  background: #fff;
  color: #3c3c3c;
  font-family: "Noto Sans", "Open Sans", sans-serif;
  font-size: 12px;
  overflow: hidden;
}

button {
  display: flex;
  align-items: center;
  justify-content: center;
  padding: 0;
  border: none;
  background: none;
  color: inherit;
  font: inherit;
}

svg {
  display: block;
  flex: none;
}

.sprite {
  position: absolute;
  width: 0;
  height: 0;
}

.caret {
  border: 4px solid transparent;
  border-top: 5px solid #808080;
  border-bottom: none;
}

.caret.light {
  border-top-color: #a9a9a9;
}

/* Window title */
.titlebar {
  display: flex;
  align-items: center;
  height: 23px;
  padding-left: 3px;
  background: linear-gradient(90deg, #edf5f8, #ebf3f9 80%, #e9f5f7);
  color: #111;
}

.app-logo {
  width: 14px;
  height: 16px;
  margin-right: 7px;
}

.app-title {
  flex: 1;
  font-family: Roboto, sans-serif;
}

.window-button {
  width: 46px;
  height: 23px;
}

.window-button svg {
  width: 12px;
  height: 12px;
}

/* Document bar */
.docbar {
  display: flex;
  height: 32px;
  padding-top: 4px;
  background: #d9d9d9;
}

.quick-access {
  display: flex;
  align-items: center;
  gap: 10px;
  width: 216px;
  padding-left: 15px;
  padding-bottom: 4px;
}

.quick-access svg,
.account-bar svg {
  width: 18px;
  height: 18px;
}

.quick-access .caret {
  margin-left: 3px;
}

.doc-tab {
  flex: 1;
  display: flex;
  align-items: center;
  border-radius: 5px 5px 0 0;
  background: #f5f5f5;
}

.doc-name {
  flex: 1;
  display: flex;
  align-items: center;
  justify-content: center;
  gap: 6px;
  padding-left: 8px;
  font-family: Roboto, sans-serif;
}

.doc-name svg {
  width: 16px;
  height: 16px;
}

.doc-close {
  width: 22px;
}

.doc-close svg {
  width: 12px;
  height: 12px;
}

.account-bar {
  display: flex;
  align-items: center;
  gap: 10px;
  padding: 0 12px 6px 9px;
}

.account-bar .avatar svg {
  width: 24px;
  height: 24px;
}

/* Ribbon */
.ribbon {
  display: flex;
  height: 85px;
  background: #f5f5f5;
}

.workspace {
  gap: 6px;
  width: 110px;
  height: 62px;
  margin: 10px 4px 0 12px;
  border: 2px solid #d6d6d6;
  border-radius: 4px;
  font-size: 11px;
  font-weight: 600;
}

.ribbon-main {
  flex: 1;
}

.ribbon-tabs {
  display: flex;
  gap: 19px;
  padding-left: 10px;
}

.ribbon-tabs button {
  height: 23px;
  padding: 2px 14px 0;
  border-bottom: 3px solid transparent;
}

.ribbon-tabs .active {
  border-bottom-color: #3c3c3c;
  font-weight: 600;
}

.ribbon-groups {
  display: flex;
  padding-top: 3px;
}

.group {
  display: flex;
  flex-direction: column;
  align-items: center;
  height: 52px;
  border-right: 2px solid #dcdcdc;
}

.group:last-child {
  border-right: none;
}

.tools {
  display: flex;
  gap: 11px;
  padding: 1px 10px;
}

.tools svg {
  width: 32px;
  height: 32px;
}

.tools .pressed {
  width: 40px;
  height: 40px;
  margin: -4px 0;
  border: 2px solid #a9d9f0;
  background: #dcedf7;
}

.group-menu {
  gap: 3px;
  padding: 0 12px;
  height: 18px;
  margin-top: 3px;
  white-space: nowrap;
}

/* Viewport */
.viewport {
  position: relative;
  flex: 1;
  display: flex;
}

.side {
  position: absolute;
  top: 0;
  bottom: 0;
  left: 0;
  display: flex;
  flex-direction: column;
  width: 361px;
  padding: 4px;
}

.panel-header {
  display: flex;
  align-items: center;
  height: 25px;
  padding: 0 8px 0 2px;
  border: 1px solid #dedede;
  background: #f5f5f5;
}

.panel-header h2 {
  flex: 1;
  margin: 0 0 0 9px;
  font-size: 12px;
  font-weight: 400;
}

.panel-header svg {
  width: 16px;
  height: 16px;
}

.panel-header.comments {
  margin-top: auto;
}

.comments h2 {
  margin-left: 25px;
}

.tree {
  margin: 3px 0 0;
  padding: 0;
  list-style: none;
}

.tree li {
  display: flex;
  align-items: center;
  height: 24px;
  padding-left: 32px;
}

.tree .root {
  padding-left: 14px;
}

.tree svg {
  width: 16px;
  height: 16px;
}

.toggle {
  width: 16px;
  margin-right: 6px;
}

.node {
  display: flex;
  align-items: center;
  gap: 9px;
  height: 20px;
  padding: 0 12px 0 3px;
  background: #f5f5f5;
}

.node > span {
  margin-left: 5px;
}

.node > .root-name {
  display: flex;
  align-items: center;
  gap: 14px;
  height: 20px;
  margin-left: -3px;
  margin-right: -5px;
  padding: 0 9px 0 3px;
  background: #d9d9d9;
  font-weight: 600;
}

.node > .selected {
  display: flex;
  align-items: center;
  height: 20px;
  margin-left: -4px;
  margin-right: -4px;
  border: 1px solid #a8a8a8;
}

.selected svg {
  margin: 0 5px 0 3px;
}

.selected span {
  padding: 0 11px 0 9px;
  background: #92d0ee;
  line-height: 18px;
}

.node input {
  appearance: none;
  width: 13px;
  height: 13px;
  margin: 0;
  border: 1px solid #333;
  border-radius: 50%;
  background: #fff;
}

.node input:checked {
  background: radial-gradient(#333 0 2px, #fff 3px);
}

.scene {
  flex: 1;
  display: flex;
  justify-content: center;
  align-items: center;
  padding-top: 100px;
}

.model {
  width: 530px;
  height: 690px;
}

.viewcube {
  position: absolute;
  top: 0;
  right: 0;
  width: 179px;
  height: 150px;
}

.cube-text {
  fill: #999da2;
  font-size: 11px;
  font-weight: 700;
}

.axis-text {
  font-size: 17px;
}

.view-nav {
  position: absolute;
  bottom: 6px;
  left: 50%;
  display: flex;
  align-items: center;
  gap: 8px;
  height: 24px;
  padding: 0 2px;
  background: #f4f4f4;
  transform: translateX(-50%);
}

.view-nav svg {
  width: 18px;
  height: 18px;
}

.view-nav .caret {
  margin-left: 2px;
  border-width: 4px 3px 0;
}

/* Timeline */
.timeline {
  height: 49px;
  background: #f5f5f5;
}

.scrollbar {
  width: 27%;
  height: 6px;
  margin-left: 4px;
  border-radius: 3px;
  background: #dcdcdc;
}

.timeline-row {
  display: flex;
  padding: 10px 12px 0 8px;
}

.playback {
  display: flex;
  align-items: center;
  gap: 7px;
  height: 26px;
}

.playback svg {
  width: 18px;
  height: 18px;
}

.features {
  flex: 1;
  display: flex;
  align-items: flex-end;
  padding-left: 16px;
}

/* unfinished end of the history line */
.features::after {
  content: "";
  width: 10px;
  height: 2px;
  background: repeating-linear-gradient(90deg, #f5f5f5 0 2px, #c6c6c6 2px 5px);
}

.feature {
  flex: none;
  flex-direction: column;
  justify-content: flex-start;
  width: 24px;
  height: 26px;
  background: linear-gradient(#c6c6c6, #c6c6c6) bottom right / 24px 2px no-repeat;
}

.feature:first-child {
  background-size: 13px 2px;
}

.feature svg {
  width: 16px;
  height: 16px;
}

.feature::after {
  content: "";
  width: 2px;
  height: 5px;
  margin-top: 3px;
  background: #c6c6c6;
}

.settings svg {
  width: 17px;
  height: 17px;
}
```

FILE: timeline.js
```js
// Feature history, one entry per timeline step
const history = [
  'sketch', 'revolve', 'chamfer', 'thread', 'thread', 'sketch', 'extrude', 'extrude',
  'sketch', 'extrude', 'sketch', 'extrude', 'fillet', 'fillet', 'pattern', 'fillet',
  'fillet', 'combine', 'newcomp', 'plane', 'sketch', 'extrude', 'shell', 'thread',
  'sketch', 'extrude', 'sketch', 'extrude', 'sketch', 'extrude', 'sketch', 'extrude',
  'sketch', 'extrude', 'sketch', 'extrude', 'sketch', 'extrude', 'coil', 'tangent',
  'sketch', 'extrude', 'pattern', 'fillet', 'mirror', 'fillet', 'newcomp', 'sketch',
  'extrude', 'sketch', 'extrude', 'sketch', 'extrude', 'sketch', 'extrude', 'tangent',
  'sketch', 'extrude', 'pattern', 'position', 'extrude', 'position', 'extrude', 'thread',
  'fillet', 'mirror', 'position', 'tangent', 'sketch', 'extrude', 'sketch', 'extrude'
];

document.getElementById('features').innerHTML = history
  .map(name => `<button class="feature" aria-label="${name}"><svg><use href="#t-${name}"/></svg></button>`)
  .join('');
```
